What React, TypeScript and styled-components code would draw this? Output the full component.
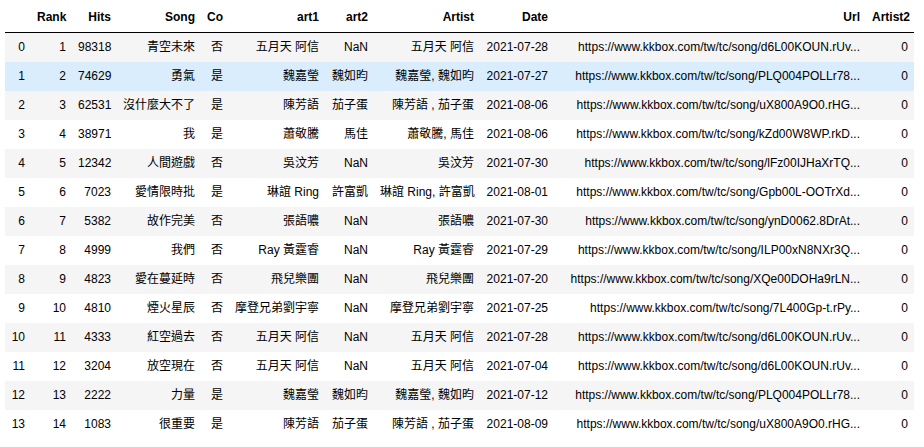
import styled, { createGlobalStyle } from 'styled-components';

const GlobalStyle = createGlobalStyle`
  html, body {
    margin: 0;
    padding: 0;
    background: #ffffff;
  }
`;

const Wrapper = styled.div`
  padding: 3px 0 0 5px;
  font-family: "Liberation Sans", Arial, "Noto Sans CJK TC", sans-serif;
`;

const Table = styled.table`
  border-collapse: collapse;
  border-spacing: 0;
  table-layout: fixed;
  width: 909px;
  font-size: 12px;
  color: #000;
  border: none;
`;

const Col = styled.col<{ $w: number }>`
  width: ${({ $w }) => $w}px;
`;

const Head = styled.thead`
  border-bottom: 1px solid #000;
  vertical-align: bottom;
`;

const Row = styled.tr<{ $striped: boolean; $hover?: boolean }>`
  background: ${({ $striped, $hover }) =>
    $hover ? 'rgba(66, 165, 245, 0.2)' : $striped ? '#f5f5f5' : 'transparent'};
`;

const HeaderCell = styled.th`
  text-align: right;
  vertical-align: middle;
  padding: 6px;
  line-height: 17px;
  font-weight: bold;
  white-space: nowrap;
`;

const IndexCell = styled.th`
  text-align: right;
  vertical-align: middle;
  padding: 6px;
  line-height: 17px;
  font-weight: normal;
`;

const Cell = styled.td`
  text-align: right;
  vertical-align: middle;
  padding: 6px;
  line-height: 17px;
  white-space: nowrap;
  overflow: hidden;
`;

const columns = ['Rank', 'Hits', 'Song', 'Co', 'art1', 'art2', 'Artist', 'Date', 'Url', 'Artist2'];
const widths = [26, 41, 45, 84, 28, 96, 49, 106, 74, 312, 48];

const base = 'https://www.kkbox.com/tw/tc/song/';

const rows: (string | number)[][] = [
  [1, 98318, '青空未來', '否', '五月天 阿信', 'NaN', '五月天 阿信', '2021-07-28', 'd6L00KOUN.rUv...', 0],
  [2, 74629, '勇氣', '是', '魏嘉瑩', '魏如昀', '魏嘉瑩, 魏如昀', '2021-07-27', 'PLQ004POLLr78...', 0],
  [3, 62531, '沒什麼大不了', '是', '陳芳語', '茄子蛋', '陳芳語 , 茄子蛋', '2021-08-06', 'uX800A9O0.rHG...', 0],
  [4, 38971, '我', '是', '蕭敬騰', '馬佳', '蕭敬騰, 馬佳', '2021-08-06', 'kZd00W8WP.rkD...', 0],
  [5, 12342, '人間遊戲', '否', '吳汶芳', 'NaN', '吳汶芳', '2021-07-30', 'lFz00IJHaXrTQ...', 0],
  [6, 7023, '愛情限時批', '是', '琳誼 Ring', '許富凱', '琳誼 Ring, 許富凱', '2021-08-01', 'Gpb00L-OOTrXd...', 0],
  [7, 5382, '故作完美', '否', '張語噥', 'NaN', '張語噥', '2021-07-30', 'ynD0062.8DrAt...', 0],
  [8, 4999, '我們', '否', 'Ray 黃霆睿', 'NaN', 'Ray 黃霆睿', '2021-07-29', 'ILP00xN8NXr3Q...', 0],
  [9, 4823, '愛在蔓延時', '否', '飛兒樂團', 'NaN', '飛兒樂團', '2021-07-20', 'XQe00DOHa9rLN...', 0],
  [10, 4810, '煙火星辰', '否', '摩登兄弟劉宇寧', 'NaN', '摩登兄弟劉宇寧', '2021-07-25', '7L400Gp-t.rPy...', 0],
  [11, 4333, '紅空過去', '否', '五月天 阿信', 'NaN', '五月天 阿信', '2021-07-28', 'd6L00KOUN.rUv...', 0],
  [12, 3204, '放空現在', '否', '五月天 阿信', 'NaN', '五月天 阿信', '2021-07-04', 'd6L00KOUN.rUv...', 0],
  [13, 2222, '力量', '是', '魏嘉瑩', '魏如昀', '魏嘉瑩, 魏如昀', '2021-07-12', 'PLQ004POLLr78...', 0],
  [14, 1083, '很重要', '是', '陳芳語', '茄子蛋', '陳芳語 , 茄子蛋', '2021-08-09', 'uX800A9O0.rHG...', 0],
];

export default function App() {
  return (
    <Wrapper>
      <GlobalStyle />
      <Table>
        <colgroup>
          {widths.map((w, i) => (
            <Col key={i} $w={w} />
          ))}
        </colgroup>
        <Head>
          <tr>
            <HeaderCell />
            {columns.map((c) => (
              <HeaderCell key={c}>{c}</HeaderCell>
            ))}
          </tr>
        </Head>
        <tbody>
          {rows.map((r, i) => (
            <Row key={i} $striped={i % 2 === 0} $hover={i === 1}>
              <IndexCell>{i}</IndexCell>
              {r.map((v, j) => (
                <Cell key={j}>{j === 8 ? base + v : v}</Cell>
              ))}
            </Row>
          ))}
        </tbody>
      </Table>
    </Wrapper>
  );
}
